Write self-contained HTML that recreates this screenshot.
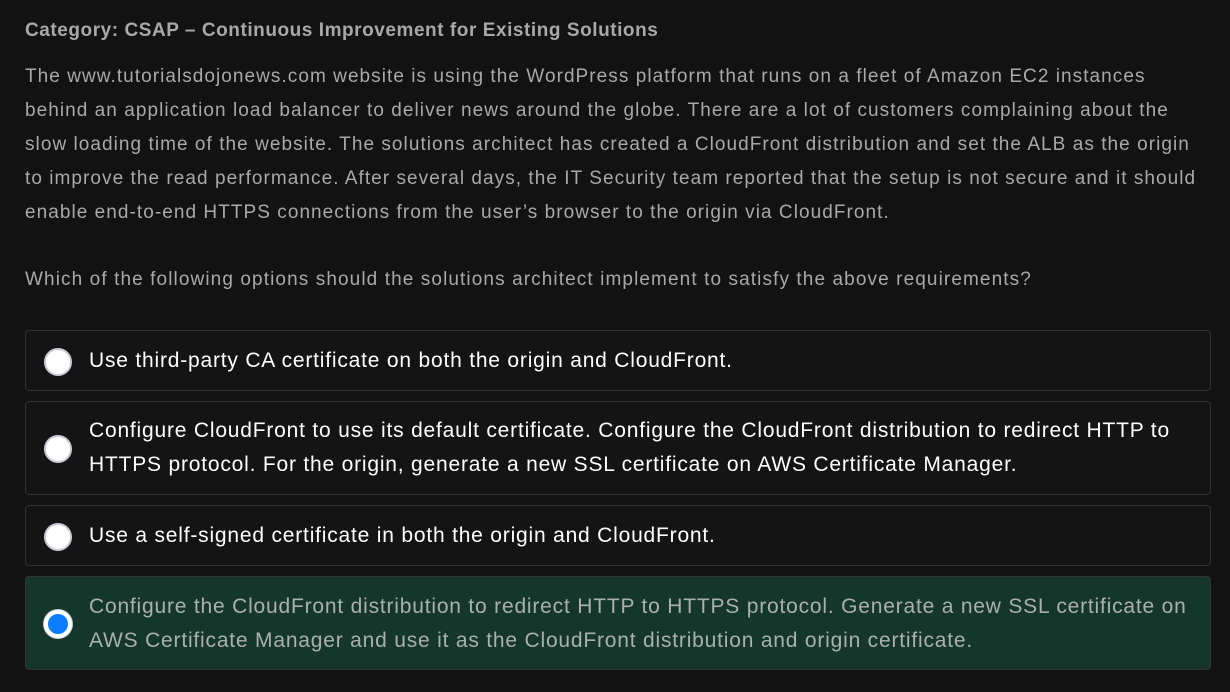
<!DOCTYPE html>
<html><head><style>
body{margin:0;background:#121212;width:1230px;height:692px;overflow:hidden;font-family:"Liberation Sans",sans-serif;}
.t{position:absolute;left:25px;top:20px;font-size:19px;font-weight:bold;color:#a8a8a8;letter-spacing:0.55px;white-space:nowrap;}
.p{position:absolute;left:25px;top:60px;font-size:19px;line-height:34px;color:#a9a9a9;letter-spacing:1.05px;white-space:nowrap;}
.q{position:absolute;left:25px;top:263px;font-size:19px;line-height:34px;color:#a9a9a9;letter-spacing:1.1px;white-space:nowrap;}
.o{position:absolute;left:25px;width:1186px;border:1px solid #333;border-radius:4px;background:#141414;box-sizing:border-box;}
.o .r{position:absolute;left:18px;top:50%;margin-top:-13px;width:24px;height:24px;border-radius:50%;background:#fff;border:2px solid #c8ccd4;}
.o .x{position:absolute;left:63px;top:12px;font-size:21px;line-height:34px;color:#fff;letter-spacing:0.8px;white-space:nowrap;}
.o .x.one{top:13px;}
.s{background:#15372b;}
.s .x{color:#a9b0ad;top:13px;}
.s .r{background:#0a7cff;border:4px solid #fff;width:20px;height:20px;box-shadow:0 0 0 1px #c8ccd4;}
</style></head><body>
<div class="t">Category: CSAP – Continuous Improvement for Existing Solutions</div>
<div class="p">The www.tutorialsdojonews.com website is using the WordPress platform that runs on a fleet of Amazon EC2 instances<br>behind an application load balancer to deliver news around the globe. There are a lot of customers complaining about the<br>slow loading time of the website. The solutions architect has created a CloudFront distribution and set the ALB as the origin<br>to improve the read performance. After several days, the IT Security team reported that the setup is not secure and it should<br>enable end-to-end HTTPS connections from the user’s browser to the origin via CloudFront.</div>
<div class="q">Which of the following options should the solutions architect implement to satisfy the above requirements?</div>
<div class="o" style="top:330px;height:61px"><div class="r"></div><div class="x one">Use third-party CA certificate on both the origin and CloudFront.</div></div>
<div class="o" style="top:401px;height:94px"><div class="r"></div><div class="x">Configure CloudFront to use its default certificate. Configure the CloudFront distribution to redirect HTTP to<br>HTTPS protocol. For the origin, generate a new SSL certificate on AWS Certificate Manager.</div></div>
<div class="o" style="top:505px;height:61px"><div class="r"></div><div class="x one">Use a self-signed certificate in both the origin and CloudFront.</div></div>
<div class="o s" style="top:576px;height:94px"><div class="r"></div><div class="x">Configure the CloudFront distribution to redirect HTTP to HTTPS protocol. Generate a new SSL certificate on<br>AWS Certificate Manager and use it as the CloudFront distribution and origin certificate.</div></div>
</body></html>
